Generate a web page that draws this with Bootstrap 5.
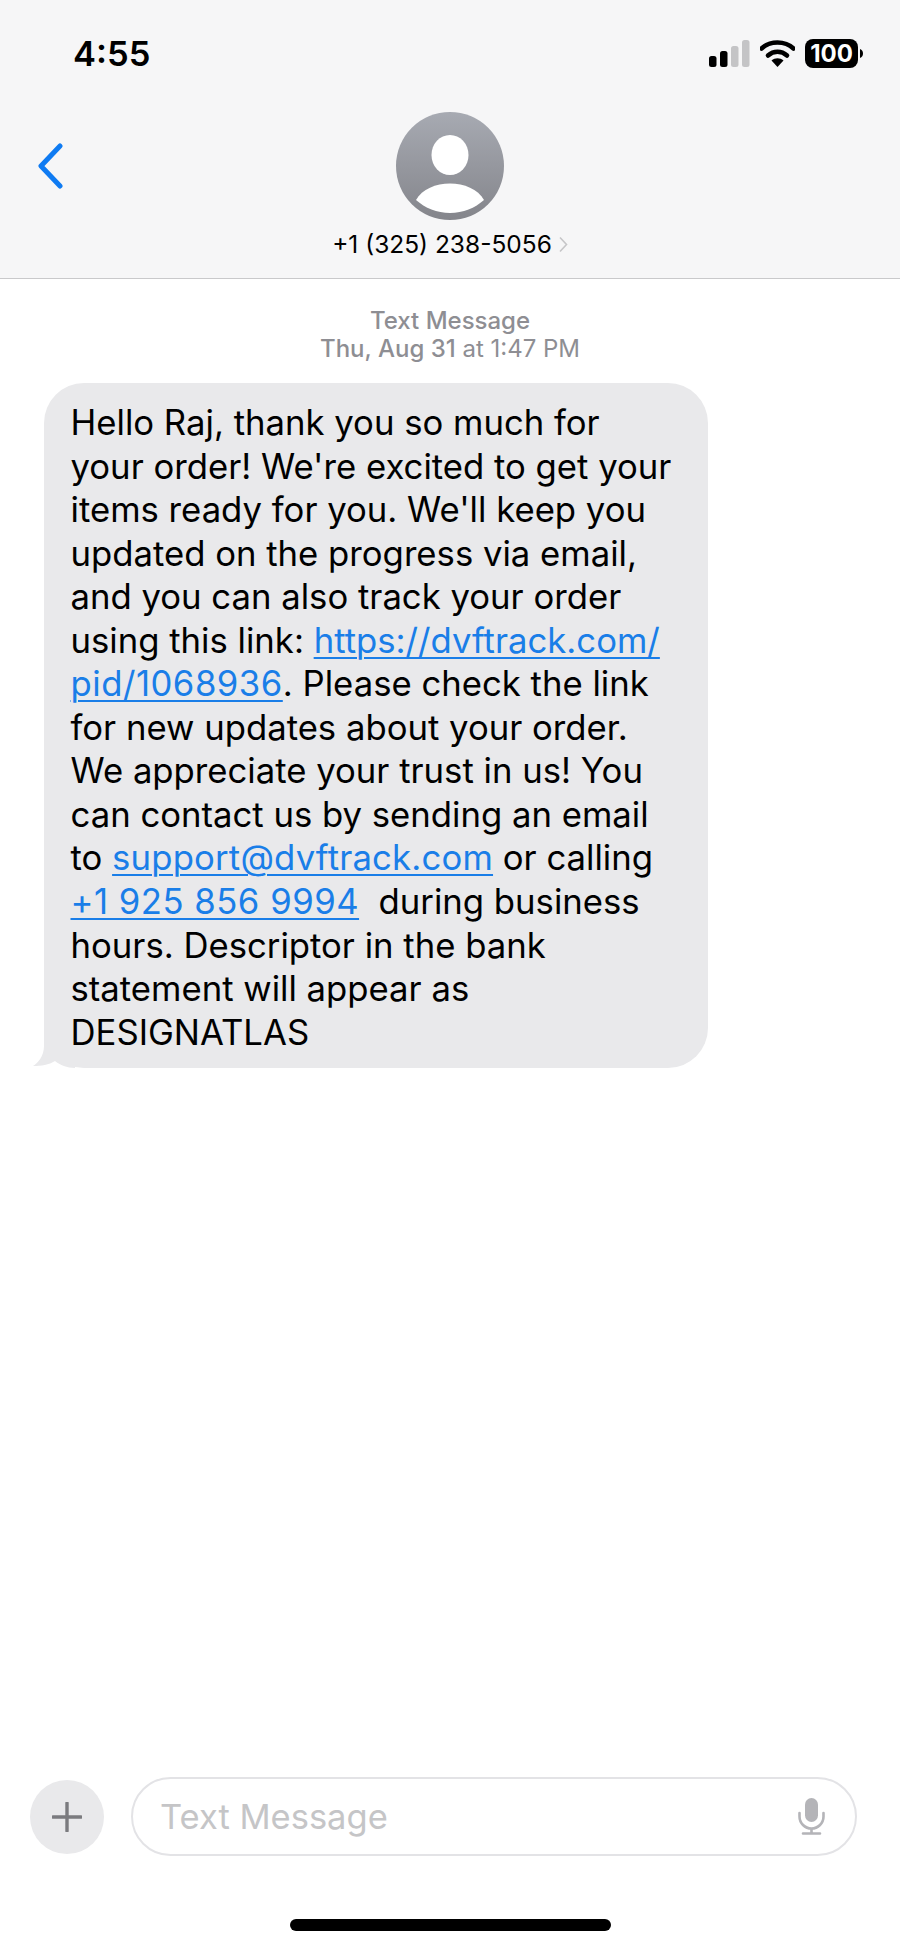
<!DOCTYPE html>
<html lang="en">
<head>
<meta charset="utf-8">
<title>Messages</title>
<link href="https://cdn.jsdelivr.net/npm/bootstrap@5.3.0/dist/css/bootstrap.min.css" rel="stylesheet">
<style>
html,body{margin:0;background:#fff}
.phone{width:900px;height:1948px;font-family:Inter,"Liberation Sans",sans-serif;color:#000}
.topbar{height:279px;background:#f6f6f7;border-bottom:1px solid #c9c9cb}
.statusrow{height:108px;padding:39px 37px 0 73px}
.clock{font-size:34.5px;font-weight:600;line-height:30px}
.sysicons{gap:10px}
.navrow{height:170px}
.backlink{left:37px;top:35px}
.navrow-in{width:100%}
.phonenum{font-size:24.5px;line-height:26px;margin-top:11px;gap:6px}
.stamp{font-size:24px;line-height:28px;color:#8e8e93;padding-top:28px;text-align:center}
.thread{padding:20px 0 0 44px}
.bubble{width:664px;height:685px;background:#e9e9eb;border-radius:40px;padding:18px 20px 0 26.5px;font-size:34.7px;line-height:43.55px;white-space:nowrap}
.msgtext{position:relative;z-index:1;display:block}
.bubble a{color:#1a7ee8;text-decoration-thickness:2px;text-underline-offset:4px}
.bubble a.numlink{letter-spacing:.5px}
.bubble a.maillink{letter-spacing:.18px}
.tail{left:-11px;bottom:0}
.composer{padding:0 43px 0 30px;gap:27px;height:79px}
.plusbtn{width:74px;height:74px;background:#e9e9eb}
.field{height:79px;flex:1;border:2px solid #e3e3e6;border-radius:40px;padding:0 30px 0 27px;color:#c5c5c7;font-size:34.5px}
.homebar{width:321px;height:12px;background:#000;border-radius:6px}
.homewrap{padding-top:63px;height:92px}
</style>
</head>
<body>
<div class="phone d-flex flex-column">
  <header class="topbar">
    <div class="statusrow d-flex justify-content-between align-items-start">
      <div class="clock">4:55</div>
      <div class="sysicons d-flex align-items-center">
        <svg width="41" height="27" viewBox="0 0 41 27"><rect x="0" y="16" width="7.5" height="11" rx="2.5" fill="#000"/><rect x="11" y="11" width="7.5" height="16" rx="2.5" fill="#000"/><rect x="22" y="6" width="7.5" height="21" rx="2.5" fill="#c4c4c6"/><rect x="33" y="0" width="7.5" height="27" rx="2.5" fill="#c4c4c6"/></svg>
        <svg width="35" height="27" viewBox="0 0 35 27"><path d="M1.5 8.5C10 .5 25 .5 33.5 8.5" fill="none" stroke="#000" stroke-width="4.6" stroke-linecap="round"/><path d="M8 15.5c5.500-5 13.500-5 19 0" fill="none" stroke="#000" stroke-width="4.600" stroke-linecap="round"/><path d="M17.500 27l-6-6.500c3.500-3 8.500-3 12 0z" fill="#000"/></svg>
        <svg width="58" height="29" viewBox="0 0 58 29"><rect width="53" height="29" rx="8" fill="#000"/><path d="M55 10c2 .5 3 2.500 3 4.500s-1 4-3 4.500z" fill="#000"/><text x="26.500" y="23" text-anchor="middle" fill="#fff" font-family="Inter,'Liberation Sans',sans-serif" font-size="24" font-weight="700">100</text></svg>
      </div>
    </div>
    <div class="navrow position-relative">
      <svg class="backlink position-absolute" width="26" height="46" viewBox="0 0 26 46"><path d="M23 3 4 23l19 20" fill="none" stroke="#0f7bf2" stroke-width="5" stroke-linecap="round" stroke-linejoin="round"/></svg>
      <div class="navrow-in d-flex flex-column align-items-center pt-1">
        <svg width="108" height="108" viewBox="0 0 108 108">
          <defs><linearGradient id="avg" x1="0" y1="0" x2="0" y2="1"><stop offset="0" stop-color="#a7aab2"/><stop offset="1" stop-color="#84858b"/></linearGradient></defs>
          <circle cx="54" cy="54" r="54" fill="url(#avg)"/>
          <ellipse cx="54" cy="43" rx="18.500" ry="20" fill="#fff"/>
          <path d="M20 88c6-11 20-16.500 34-16.500S82 77 88 88c-9 8-21 13-34 13S29 96 20 88z" fill="#fff"/>
        </svg>
        <div class="phonenum d-flex align-items-center">
          <span>+1 (325) 238-5056</span>
          <svg width="10" height="17" viewBox="0 0 10 17"><path d="M2 1.500 8.500 8.500 2 15.500" fill="none" stroke="#c6c6c8" stroke-width="1.600"/></svg>
        </div>
      </div>
    </div>
  </header>

  <div class="stamp"><span class="fw-medium">Text Message</span><br><span class="fw-medium">Thu, Aug 31</span> at 1:47 PM</div>

  <main class="thread flex-grow-1">
    <div class="bubble position-relative">
      <svg class="tail position-absolute" width="42" height="40" viewBox="0 0 42 40"><path d="M11 0V18C11 28 5 35 0 38 8 38 16 37 22 33 27 37 34 40 42 40V0z" fill="#e9e9eb"/></svg>
      <span class="msgtext">
      Hello Raj, thank you so much for<br>
      your order! We're excited to get your<br>
      items ready for you. We'll keep you<br>
      updated on the progress via email,<br>
      and you can also track your order<br>
      using this link: <a href="#">https://dvftrack.com/<br></a><a href="#" class="numlink">pid/1068936</a>. Please check the link<br>
      for new updates about your order.<br>
      We appreciate your trust in us! You<br>
      can contact us by sending an email<br>
      to <a href="#" class="maillink">support@dvftrack.com</a> or calling<br>
      <a href="#" class="numlink">+1 925 856 9994</a>&nbsp; during business<br>
      hours. Descriptor in the bank<br>
      statement will appear as<br>
      DESIGNATLAS
      </span>
    </div>
  </main>

  <footer class="composer d-flex align-items-center">
    <div class="plusbtn rounded-circle d-flex align-items-center justify-content-center">
      <svg width="30" height="30" viewBox="0 0 30 30"><path d="M15 1v28M1 15h28" stroke="#7b7b7f" stroke-width="3.400" stroke-linecap="round"/></svg>
    </div>
    <div class="field d-flex align-items-center justify-content-between">
      <span>Text Message</span>
      <svg width="27" height="37" viewBox="0 0 27 37"><rect x="7" y="0" width="13" height="24" rx="6.500" fill="#b4b4b8"/><path d="M1.500 15v3.500a12 12 0 0 0 24 0V15M13.500 30.500V35M5 35.500h17" fill="none" stroke="#b4b4b8" stroke-width="2.600" stroke-linecap="round"/></svg>
    </div>
  </footer>
  <div class="homewrap d-flex justify-content-center"><div class="homebar"></div></div>
</div>
<script src="https://cdn.jsdelivr.net/npm/bootstrap@5.3.0/dist/js/bootstrap.bundle.min.js"></script>
</body>
</html>
